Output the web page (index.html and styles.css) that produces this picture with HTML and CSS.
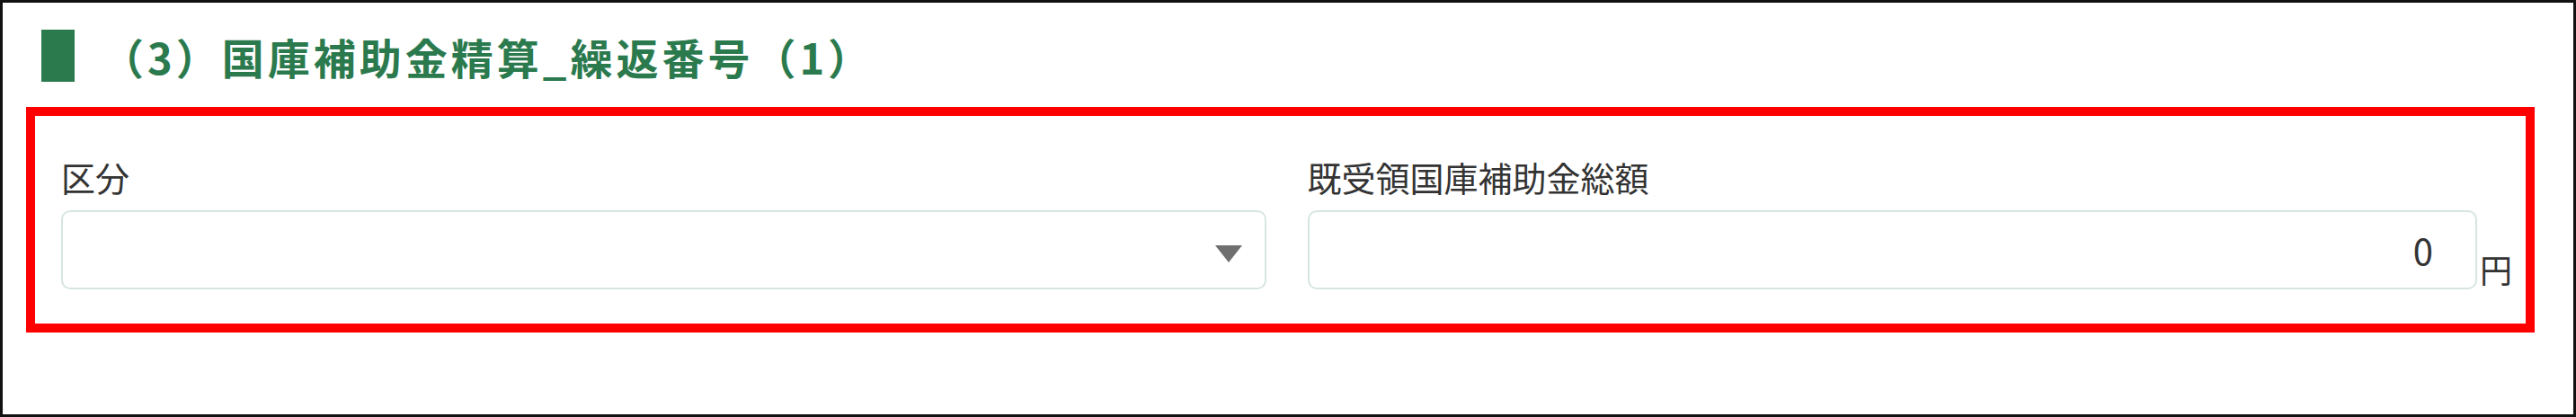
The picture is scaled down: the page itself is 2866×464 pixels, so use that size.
FILE: index.html
```html
<!DOCTYPE html>
<html lang="ja">
<head>
    <meta charset="UTF-8">
    <meta name="viewport" content="width=device-width, initial-scale=1.0">
    <title>国庫補助金精算</title>
    <link rel="stylesheet" href="styles.css">
</head>
<body>
    <div class="frame">
        <h2 class="section-title"><span class="title-bar"></span>（3）国庫補助金精算_繰返番号（1）</h2>
        <div class="panel">
            <div class="field">
                <label class="field-label">区分</label>
                <div class="select-box">
                    <svg class="select-arrow" width="30" height="19" viewBox="0 0 30 19"><path d="M0 0 L30 0 L15 19 Z" fill="#6f6f6f"/></svg>
                </div>
            </div>
            <div class="field">
                <label class="field-label">既受領国庫補助金総額</label>
                <div class="amount-row">
                    <div class="amount-input">0</div>
                    <span class="unit">円</span>
                </div>
            </div>
        </div>
    </div>
</body>
</html>
```

FILE: styles.css
```css
body {
    margin: 0;
    font-family: "Noto Sans CJK JP", "Noto Sans", sans-serif;
    background: #fff;
}
.frame {
    width: 2866px;
    height: 464px;
    box-sizing: border-box;
    border: 3px solid #111;
    padding-top: 30px;
}
.section-title {
    display: flex;
    align-items: center;
    margin: 0 0 28px 43px;
    height: 58px;
    font-size: 47px;
    font-weight: bold;
    line-height: 1;
    letter-spacing: 4px;
    color: #2b7a4e;
}
.title-bar {
    display: inline-block;
    width: 37px;
    height: 58px;
    background-color: #2b7a4e;
    margin-right: 30px;
}
.panel {
    margin: 0 43px 0 26px;
    border: 10px solid #ff0000;
    padding: 49px 15px 38px 29px;
    display: grid;
    grid-template-columns: 1fr 1fr;
    column-gap: 46px;
}
.field-label {
    display: block;
    font-size: 38px;
    line-height: 1;
    color: #333;
    margin-bottom: 18px;
}
.select-box,
.amount-input {
    height: 88px;
    box-sizing: border-box;
    border: 2px solid #d6e6df;
    border-radius: 10px;
    background: #fff;
}
.select-box {
    display: flex;
    align-items: center;
    justify-content: flex-end;
    padding-right: 25px;
}
.select-arrow {
    margin-top: 8px;
}
.amount-row {
    display: flex;
    align-items: flex-end;
}
.amount-input {
    flex: 1;
    display: flex;
    align-items: center;
    justify-content: flex-end;
    padding-right: 47px;
    font-size: 40px;
    color: #333;
}
.unit {
    font-size: 36px;
    line-height: 1;
    color: #333;
    margin: 0 0 5px 3px;
}
```
